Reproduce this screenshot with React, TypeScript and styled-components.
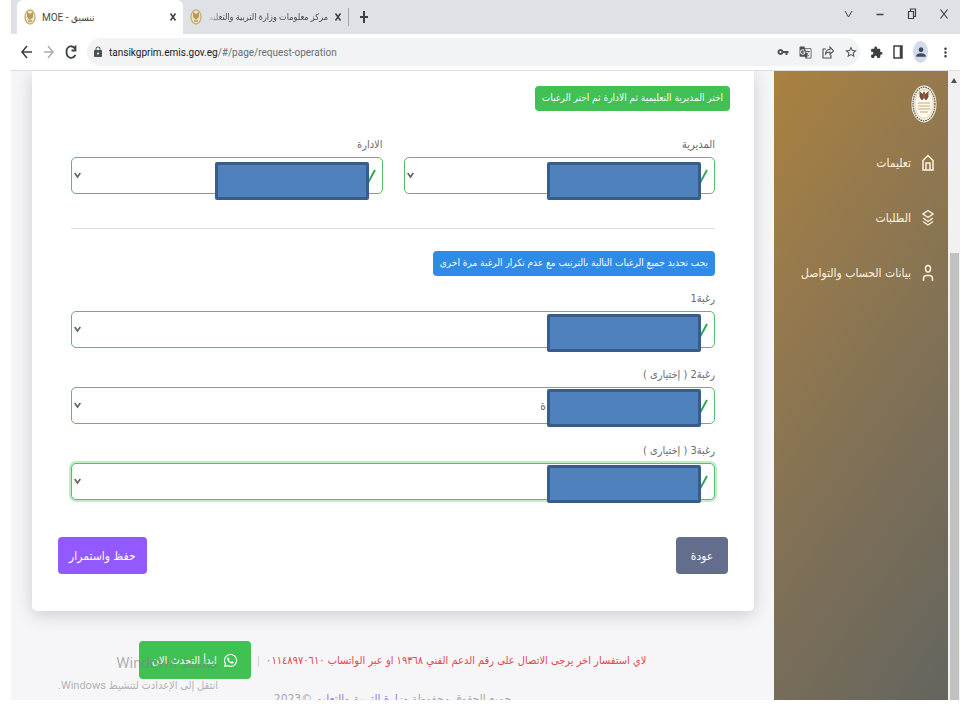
import React from "react";
import styled, { createGlobalStyle, css } from "styled-components";
import { MdVpnKey, MdGTranslate, MdStarBorder, MdExtension, MdPerson, MdLock, MdMoreVert } from "react-icons/md";
import { FaWhatsapp } from "react-icons/fa";

const arabic = `"DejaVu Sans Condensed", "DejaVu Sans", sans-serif`;
const ui = `Roboto, "DejaVu Sans Condensed", "DejaVu Sans", sans-serif`;

const Global = createGlobalStyle`
  * { box-sizing: border-box; }
  body { margin: 0; background: #fff; font-family: ${arabic}; }
  button, select { font: inherit; }
`;

const Window = styled.div`
  display: flex;
  flex-direction: column;
  height: 100vh;
  padding: 0 0 20px 11px;
`;

const TabStrip = styled.header`
  display: flex;
  align-items: center;
  flex: none;
  height: 34px;
  padding-left: 6px;
  background: #dee1e6;
  font-family: ${ui};
  font-size: 10px;
  color: #45494d;
`;

const Tab = styled.div<{ $active?: boolean }>`
  display: flex;
  align-items: center;
  gap: 6px;
  height: 34px;
  padding: 0 6px 0 7px;
  width: ${(p) => (p.$active ? 166 : 165)}px;
  border-radius: 6px 6px 0 0;
  background: ${(p) => (p.$active ? "#fff" : "transparent")};
  ${(p) =>
    !p.$active &&
    css`
      font-size: 9px;
    `}
`;

const TabTitle = styled.span<{ $fade?: boolean }>`
  flex: 1;
  min-width: 0;
  overflow: hidden;
  white-space: nowrap;
  ${(p) =>
    p.$fade &&
    css`
      direction: rtl;
      mask-image: linear-gradient(to right, transparent, #000 14px);
    `}
`;

const PlainButton = styled.button`
  display: flex;
  align-items: center;
  justify-content: center;
  padding: 0;
  border: 0;
  background: none;
  color: #3c4043;
`;

const NewTab = styled(PlainButton)`
  padding-left: 10px;
  border-left: 1px solid #a5a9ae;
  height: 18px;
`;

const WindowControls = styled.div`
  display: flex;
  gap: 22px;
  margin-left: auto;
  padding: 0 11px 6px 0;
`;

const Toolbar = styled.div`
  display: flex;
  align-items: center;
  flex: none;
  height: 37px;
  gap: 10px;
  padding: 0 7px 0 9px;
  border-bottom: 1px solid #dcdde0;
  background: #fff;
`;

const Address = styled.div`
  display: flex;
  align-items: center;
  flex: 1;
  gap: 10px;
  height: 28px;
  padding: 0 2px 0 5px;
  border-radius: 14px;
  background: #f1f3f4;
  color: #4d5156;
`;

const Site = styled.div`
  display: flex;
  align-items: center;
  flex: 1;
  gap: 5px;
`;

const Url = styled.span`
  font-family: ${ui};
  font-size: 10px;
  color: #6a6e73;
  b { font-weight: 400; color: #202124; }
`;

const Avatar = styled(PlainButton)`
  width: 15px;
  height: 22px;
  border-radius: 50%;
  background: #d3dbe8;
  color: #3d4a66;
`;

const Viewport = styled.div`
  display: flex;
  flex: 1;
  min-height: 0;
  overflow: hidden;
  background: #f6f6f8;
`;

const Main = styled.main`
  position: relative;
  flex: 1;
  min-width: 0;
  direction: rtl;
  overflow: hidden;
`;

const Card = styled.section`
  margin: 0 20px 30px 21px;
  padding: 15px 24px 37px 26px;
  border-radius: 0 0 5px 5px;
  background: #fff;
  box-shadow: 0 4px 18px rgba(40, 45, 60, 0.2);
`;

const Badge = styled.div<{ $tone: "green" | "blue" }>`
  width: fit-content;
  height: 25px;
  padding: 0 7px;
  border-radius: 4px;
  line-height: 24px;
  font-size: 10px;
  white-space: nowrap;
  color: #fff;
  background: ${(p) => (p.$tone === "green" ? "#3fc153" : "#2f8be6")};
`;

const Form = styled.div`
  padding: 0 15px 0 13px;
`;

const Pair = styled.div`
  display: grid;
  grid-template-columns: 1fr 1fr;
  gap: 21px;
  padding: 24px 0 34px;
  border-bottom: 1px solid #dcdcde;
  margin-bottom: 22px;
`;

const Choices = styled.div`
  display: grid;
  gap: 17px;
  padding-top: 13px;
`;

const FieldLabel = styled.label`
  display: block;
  height: 22px;
  line-height: 20px;
  font-size: 11px;
  color: #6b6b72;
`;

const Control = styled.div`
  position: relative;
`;

const Select = styled.select<{ $focus?: boolean }>`
  appearance: none;
  display: block;
  width: 100%;
  height: 37px;
  padding: 0 168px 0 20px;
  border: 1px solid #55bd6e;
  border-radius: 5px;
  background: #fff;
  color: #6b6b72;
  font-size: 12px;
  outline: none;
  box-shadow: ${(p) => (p.$focus ? "0 0 0 2px #bdeec6" : "none")};
`;

const Chevron = styled.svg`
  position: absolute;
  left: 3px;
  top: 14px;
`;

const Tick = styled.svg`
  position: absolute;
  right: 7px;
  top: 12px;
`;

const Cover = styled.div<{ $top: number }>`
  position: absolute;
  top: ${(p) => p.$top}px;
  right: 14px;
  width: 154px;
  height: 38px;
  border: 3px solid #385d8a;
  border-radius: 2px;
  background: #4f81bd;
`;

const Actions = styled.div`
  display: flex;
  justify-content: space-between;
  margin-top: 37px;
  padding-right: 2px;
`;

const ActionButton = styled.button<{ $primary?: boolean }>`
  min-width: 52px;
  height: 37px;
  padding: 0 11px;
  border: 0;
  border-radius: 4px;
  font-size: 12px;
  color: #fff;
  background: ${(p) => (p.$primary ? "#9159ff" : "#626e8c")};
`;

const Support = styled.div`
  display: flex;
  align-items: center;
  justify-content: center;
  gap: 6px;
  font-size: 11px;
  white-space: nowrap;
  color: #e2474f;
`;

const Divider = styled.span`
  color: #c9c9cf;
`;

const ChatButton = styled.a`
  display: flex;
  align-items: center;
  justify-content: center;
  gap: 6px;
  height: 38px;
  padding: 0 13px;
  border-radius: 4px;
  background: #3fc153;
  color: #fff;
  text-decoration: none;
`;

const Copyright = styled.p`
  margin: 10px 0 0;
  text-align: center;
  font-size: 12px;
  line-height: 20px;
  color: #a6a6ae;
  a { color: #9a7fe0; text-decoration: none; }
`;

const Watermark = styled.div`
  position: absolute;
  left: 47px;
  bottom: 4px;
  text-align: right;
  font-family: Roboto, ${arabic};
  font-size: 11px;
  line-height: 20px;
  white-space: nowrap;
  color: rgba(130, 130, 135, 0.62);
  pointer-events: none;
  strong { display: block; font-weight: 400; font-size: 15px; line-height: 26px; }
`;

const Sidebar = styled.aside`
  flex: none;
  width: 174px;
  padding: 14px 11px;
  direction: rtl;
  background: linear-gradient(125deg, #aa813f 0%, #94794e 30%, #7b6e58 65%, #64655f 100%);
`;

const Nav = styled.nav`
  display: grid;
  gap: 31px;
  padding-top: 24px;
`;

const NavLink = styled.a`
  display: flex;
  align-items: center;
  gap: 11px;
  height: 24px;
  padding-right: 3px;
  font-size: 12px;
  white-space: nowrap;
  color: #fff2df;
  text-decoration: none;
`;

const Scrollbar = styled.div`
  flex: none;
  display: flex;
  flex-direction: column;
  align-items: center;
  width: 12px;
  padding-top: 7px;
  background: #f1f1f1;
`;

const Thumb = styled.div`
  width: 9px;
  flex: 1;
  margin-top: 170px;
  background: #c1c1c1;
`;

const Crest = () => (
  <svg width="12" height="16" viewBox="0 0 12 16" aria-hidden="true">
    <ellipse cx="6" cy="8" rx="5" ry="7" fill="#f1e6c4" stroke="#c7b177" strokeWidth="1.4" />
    <path d="M3 3l3 2 3-2v5l-3 3-3-3z" fill="#b39a5e" />
    <path d="M4 12h4" stroke="#8d7a4a" />
  </svg>
);

const Emblem = () => (
  <svg width="26" height="38" viewBox="0 0 26 38" role="img" aria-label="شعار الوزارة">
    <ellipse cx="13" cy="19" rx="12.500" ry="18.500" fill="#fbf6ea" />
    <ellipse cx="13" cy="19" rx="11" ry="16.800" fill="none" stroke="#615b51" strokeWidth="1.300" strokeDasharray="1.600 .8" />
    <ellipse cx="13" cy="19" rx="9.300" ry="14.500" fill="#fffaf0" stroke="#d4bd8d" strokeWidth=".7" />
    <path d="M8.500 6l3 3 1.500-3 1.500 3 3-3v6l-2 3h-1l-1.500-2-1.500 2h-1l-2-3z" fill="#70533a" />
    <path d="M12 9h2v4h-2z" fill="#c64b3b" />
    <path d="M7 18h12M7 21h12M7 24h12M9 27h8" stroke="#dcc59a" strokeWidth="1.300" />
  </svg>
);

const Stroke = ({ w, h, d, color = "currentColor", sw = 1.5 }: { w: number; h: number; d: string; color?: string; sw?: number }) => (
  <svg width={w} height={h} viewBox={`0 0 ${w} ${h}`} fill="none" stroke={color} strokeWidth={sw} aria-hidden="true">
    <path d={d} />
  </svg>
);

type FieldProps = { id: string; label: string; top: number; value?: string; focus?: boolean };

const Field = ({ id, label, top, value = "", focus }: FieldProps) => (
  <div>
    <FieldLabel htmlFor={id}>{label}</FieldLabel>
    <Control>
      <Select id={id} $focus={focus} defaultValue={value}>
        <option value={value}>{value}</option>
      </Select>
      <Chevron width="7" height="9" viewBox="0 0 7 9" fill="none" stroke="#666" strokeWidth="1.7" aria-hidden="true">
        <path d="M.7 2l2.8 4L6.300 2" />
      </Chevron>
      <Tick width="10" height="14" viewBox="0 0 10 14" fill="none" stroke="#35a853" strokeWidth="2" aria-hidden="true">
        <path d="M1 8l2 4L9 1" />
      </Tick>
      <Cover $top={top} />
    </Control>
  </div>
);

export default function App() {
  return (
    <>
      <Global />
      <Window>
        <TabStrip>
          <Tab $active>
            <Crest />
            <TabTitle>MOE - تنسيق</TabTitle>
            <PlainButton aria-label="إغلاق"><Stroke w={8} h={10} d="M1.500 1.500l5 7M6.500 1.500l-5 7" /></PlainButton>
          </Tab>
          <Tab>
            <Crest />
            <TabTitle $fade>مركز معلومات وزارة التربية والتعليم</TabTitle>
            <PlainButton aria-label="إغلاق"><Stroke w={8} h={10} d="M1.500 1.500l5 7M6.500 1.500l-5 7" /></PlainButton>
          </Tab>
          <NewTab aria-label="علامة تبويب جديدة"><Stroke w={10} h={14} sw={2} d="M5 1v12M1 7h8" /></NewTab>
          <WindowControls>
            <PlainButton aria-label="بحث"><Stroke w={9} h={12} sw={1} d="M1 3l3.500 6L8 3" /></PlainButton>
            <PlainButton aria-label="تصغير"><Stroke w={10} h={12} d="M1.500 6.500h7" /></PlainButton>
            <PlainButton aria-label="استعادة"><Stroke w={10} h={12} sw={1.2} d="M1.500 3.500h5v7h-5zM3.500 3V1h5v7.500h-2" /></PlainButton>
            <PlainButton aria-label="إغلاق النافذة"><Stroke w={10} h={12} sw={1.2} d="M1.500 1.500l7 9M8.500 1.500l-7 9" /></PlainButton>
          </WindowControls>
        </TabStrip>
        <Toolbar>
          <PlainButton aria-label="رجوع"><Stroke w={13} h={14} d="M12 7H2M7 1L2 7l5 6" /></PlainButton>
          <PlainButton aria-label="تقدم"><Stroke w={12} h={14} color="#a9acb0" d="M1 7h9M5 1l5 6-5 6" /></PlainButton>
          <PlainButton aria-label="إعادة تحميل"><Stroke w={12} h={16} sw={1.8} d="M10 4.500C7 .5 1.500 2 1.500 8s6 8 9 3M10.500 1.500v5H6.500" /></PlainButton>
          <Address>
            <Site>
              <MdLock size={12} />
              <Url><b>tansikgprim.emis.gov.eg</b>/#/page/request-operation</Url>
            </Site>
            <MdVpnKey size={12} />
            <MdGTranslate size={13} />
            <Stroke w={12} h={14} sw={1.1} d="M4 4H1v9h8v-3M3.500 9c0-3 2-4.500 4.500-4.500V2l3.500 4L8 9.500V7C6 7 4.500 7.500 3.500 9z" />
            <MdStarBorder size={14} />
          </Address>
          <PlainButton aria-label="الإضافات"><MdExtension size={13} /></PlainButton>
          <PlainButton aria-label="اللوحة الجانبية"><Stroke w={10} h={14} d="M1 1h8v12H1zM7.500 1v12" /></PlainButton>
          <Avatar aria-label="الملف الشخصي"><MdPerson size={14} /></Avatar>
          <PlainButton aria-label="القائمة"><MdMoreVert size={15} /></PlainButton>
        </Toolbar>
        <Viewport>
          <Main lang="ar">
            <Card>
              <Badge $tone="green">اختر المديرية التعليمية ثم الادارة ثم اختر الرغبات</Badge>
              <Form>
                <Pair>
                  <Field id="directorate" label="المديرية" top={5} />
                  <Field id="department" label="الادارة" top={5} />
                </Pair>
                <Badge $tone="blue">يجب تحديد جميع الرغبات التالية بالترتيب مع عدم تكرار الرغبة مرة اخرى</Badge>
                <Choices>
                  <Field id="choice1" label="رغبة1" top={3} />
                  <Field id="choice2" label="رغبة2 ( إختيارى )" top={2} value="ة" />
                  <Field id="choice3" label="رغبة3 ( إختيارى )" top={2} focus />
                </Choices>
              </Form>
              <Actions>
                <ActionButton>عودة</ActionButton>
                <ActionButton $primary>حفظ واستمرار</ActionButton>
              </Actions>
            </Card>
            <Support>
              <span>لاي استفسار اخر يرجى الاتصال على رقم الدعم الفني ١٩٣٦٨ او عبر الواتساب ٠١١٤٨٩٧٠٦١٠</span>
              <Divider>|</Divider>
              <ChatButton href="#chat"><FaWhatsapp size={15} />ابدأ التحدث الان</ChatButton>
            </Support>
            <Copyright>
              جميع الحقوق محفوظة <a href="#ministry">وزارة التربية والتعليم</a> ©2023
            </Copyright>
            <Watermark>
              <strong>تنشيط Windows</strong>
              انتقل إلى الإعدادت لتنشيط Windows.
            </Watermark>
          </Main>
          <Sidebar lang="ar">
            <Emblem />
            <Nav>
              <NavLink href="#instructions">
                <Stroke w={12} h={18} d="M1 6.500L6 1.500l5 5V16H1zM4 16V9h4v7" />
                تعليمات
              </NavLink>
              <NavLink href="#requests">
                <Stroke w={12} h={18} sw={1.4} d="M6 1.500l5 3.500-5 3.500L1 5zM1 9l5 3.500L11 9M1 12.500L6 16l5-3.500" />
                الطلبات
              </NavLink>
              <NavLink href="#account">
                <Stroke w={12} h={18} d="M6 1.500c1.700 0 2.500 1.400 2.500 3S7.700 8 6 8 3.500 6.500 3.500 4.500 4.300 1.500 6 1.500zM1.500 17v-2c0-2 1-3.500 3-3.500h3c2 0 3 1.500 3 3.500v2" />
                بيانات الحساب والتواصل
              </NavLink>
            </Nav>
          </Sidebar>
          <Scrollbar>
            <svg width="6" height="5" viewBox="0 0 6 5" aria-hidden="true"><path d="M3 0l3 5H0z" fill="#505050" /></svg>
            <Thumb />
          </Scrollbar>
        </Viewport>
      </Window>
    </>
  );
}
